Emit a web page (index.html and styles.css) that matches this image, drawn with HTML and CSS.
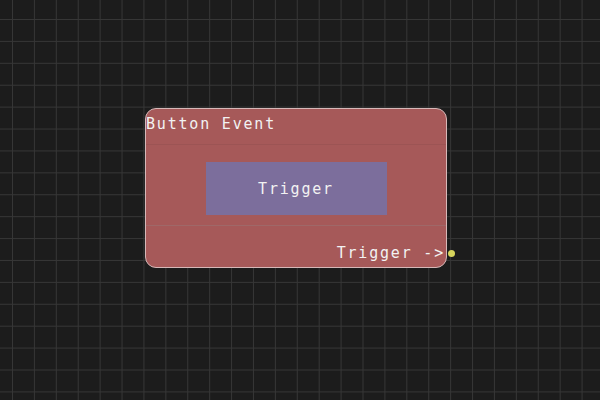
FILE: index.html
```html
<!DOCTYPE html>
<html lang="en">
<head>
    <meta charset="UTF-8">
    <meta name="viewport" content="width=device-width, initial-scale=1.0">
    <title>Node Graph</title>
    <link rel="stylesheet" href="styles.css">
</head>
<body>
    <div class="canvas">
        <div class="node">
            <div class="node-title">Button Event</div>
            <div class="node-body">
                <button class="node-button">Trigger</button>
            </div>
            <div class="node-outputs">
                <span class="port-label">Trigger -&gt;</span>
                <span class="port-dot"></span>
            </div>
        </div>
    </div>
</body>
</html>
```

FILE: styles.css
```css
html, body {
    margin: 0;
    padding: 0;
    width: 600px;
    height: 400px;
    overflow: hidden;
}

body {
    background-color: #1c1c1c;
    font-family: "DejaVu Sans Mono", "Liberation Mono", monospace;
    color: #f2f2f2;
}

.canvas {
    position: relative;
    width: 600px;
    height: 400px;
    background-image:
        linear-gradient(to right, #363636 1px, transparent 1px),
        linear-gradient(to bottom, #363636 1px, transparent 1px);
    background-size: 21.92px 21.92px;
    background-position: 12px 19px;
}

.node {
    position: absolute;
    left: 145px;
    top: 108px;
    width: 300px;
    height: 158px;
    border: 1.5px solid #d6b8b8;
    border-radius: 11px;
    background: #a65959;
    display: flex;
    flex-direction: column;
    font-size: 15px;
    letter-spacing: 1.8px;
}

.node-title {
    height: 29px;
    padding: 6px 0 0 0;
    line-height: 18px;
    border-bottom: 1px solid #9c5454;
}

.node-body {
    height: 63px;
    padding-top: 17px;
    border-bottom: 1px solid #9f6868;
    display: flex;
    justify-content: center;
    align-items: flex-start;
}

.node-button {
    width: 181px;
    height: 53px;
    border: none;
    background: #7c6e9c;
    color: #f2f2f2;
    font-family: inherit;
    font-size: 15px;
    letter-spacing: 1.8px;
    padding: 0;
}

.node-outputs {
    position: relative;
    flex: 1;
    display: flex;
    justify-content: flex-end;
    align-items: flex-start;
    padding-top: 18px;
    line-height: 18px;
}

.port-label {
    margin-right: 1px;
}

.port-dot {
    position: absolute;
    right: -9px;
    top: 23.5px;
    width: 7px;
    height: 7px;
    border-radius: 50%;
    background: #d6d45c;
}
```
